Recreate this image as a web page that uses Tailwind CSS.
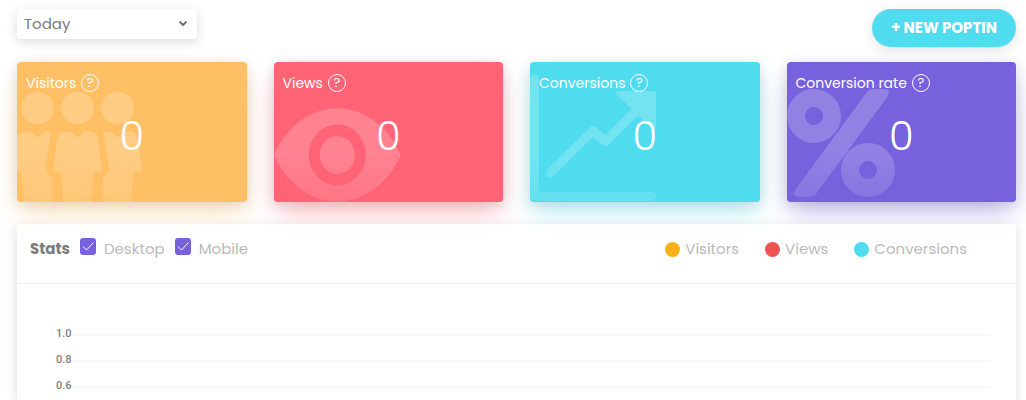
<!DOCTYPE html>
<html lang="en">

<head>
  <meta charset="UTF-8">
  <meta name="viewport" content="width=device-width, initial-scale=1.0">
  <title>Dashboard</title>
  <script src="https://cdn.jsdelivr.net/npm/@tailwindcss/browser@4"></script>
</head>

<body class="bg-white font-['Poppins','Inter',sans-serif] text-[15px] leading-6">
  <div class="h-screen overflow-hidden flex flex-col pt-[9px] pl-[17px] pr-[10px]">

    <!-- Top bar -->
    <header class="flex items-start justify-between mb-[15px]">
      <div class="relative">
        <select aria-label="Period" class="appearance-none block w-[180px] h-[30px] px-[7px] rounded bg-white text-[#7b7b7b] shadow-[0_3px_12px_rgba(0,0,0,0.14)]">
          <option>Today</option>
        </select>
        <svg class="absolute right-[9px] top-[11px] w-[10px] h-2 pointer-events-none" viewBox="0 0 10 8" fill="none" stroke="#757575" stroke-width="2"><path d="M1.500 1.500 5 5l3.500-3.500"/></svg>
      </div>
      <button class="h-[38px] px-[19px] rounded-full bg-[#50dcef] text-white font-bold shadow-[0_3px_12px_rgba(0,0,0,0.12)] cursor-pointer">+ NEW POPTIN</button>
    </header>

    <!-- Cards -->
    <section class="grid grid-cols-4 gap-[27px] mb-[22px] text-white">
      <div class="relative h-[140px] rounded bg-[#ffc065] shadow-[0_14px_26px_-4px_rgba(255,192,101,0.4),0_3px_14px_rgba(0,0,0,0.14)]">
        <svg class="absolute left-0 top-0 w-[140px] h-[140px] opacity-20" viewBox="0 0 140 140" fill="#fff">
          <circle cx="20.500" cy="46" r="16.300"/>
          <circle cx="60.500" cy="46" r="16.300"/>
          <circle cx="100.500" cy="46" r="16.300"/>
          <path d="M0 74Q3 69.700 8 69.700H13Q15 69.700 16.500 72L20.500 76 24.500 72Q26.500 69.700 29 69.700H34.300L29 104Q29 112 35.500 116L34.500 140H7L4.300 110H0Z"/>
          <path d="M48 69.700H53Q55 69.700 56.500 72L60.500 76 64.500 72Q66 69.700 68 69.700H73Q79 69.700 81 77L84.700 107Q84.700 110 82 110H77L74.500 140H46.500L44 110H39Q36.300 110 36.300 107L40 77Q42 69.700 48 69.700Z"/>
          <path d="M86.700 69.700H92Q94.500 69.700 96.500 72L100.500 76 104.500 72Q106 69.700 108 69.700H113Q119 69.700 121 77L124.700 107Q124.700 110 122 110H116.700L114 140H86.500L85.500 116Q92 112 92 104Z"/>
        </svg>
        <div class="absolute inset-x-0 bottom-0 h-12 rounded-b bg-linear-to-t from-[#ffc065]/40 to-[#ffc065]/0"></div>
        <h3 class="absolute left-[9px] top-[9px] flex items-center gap-[5px] text-sm/6">Visitors
          <button aria-label="About visitors" class="size-[18px] rounded-full border border-white text-[13px] leading-4">?</button>
        </h3>
        <div class="relative h-full flex items-center justify-center pt-2 text-[40px] leading-none font-light pointer-events-none">0</div>
      </div>

      <div class="relative h-[140px] rounded bg-[#ff6376] shadow-[0_14px_26px_-4px_rgba(255,99,118,0.4),0_3px_14px_rgba(0,0,0,0.14)]">
        <svg class="absolute left-0 top-0 w-[140px] h-[140px] opacity-20" viewBox="0 0 140 140" fill="#fff">
          <path fill-rule="evenodd" d="M0 93C12 65 37 46.300 63.300 46.300S115 65 126.700 93C115 121 90 139.700 63.300 139.700S12 121 0 93ZM34.800 93a28.500 30.500 0 1 0 57 0a28.500 30.500 0 1 0-57 0Z"/>
          <ellipse cx="63.300" cy="93" rx="17.700" ry="19"/>
        </svg>
        <div class="absolute inset-x-0 bottom-0 h-12 rounded-b bg-linear-to-t from-[#ff6376]/40 to-[#ff6376]/0"></div>
        <h3 class="absolute left-[9px] top-[9px] flex items-center gap-[5px] text-sm/6">Views
          <button aria-label="About views" class="size-[18px] rounded-full border border-white text-[13px] leading-4">?</button>
        </h3>
        <div class="relative h-full flex items-center justify-center pt-2 text-[40px] leading-none font-light pointer-events-none">0</div>
      </div>

      <div class="relative h-[140px] rounded bg-[#50dcef] shadow-[0_14px_26px_-4px_rgba(80,220,239,0.4),0_3px_14px_rgba(0,0,0,0.14)]">
        <svg class="absolute left-0 top-0 w-[140px] h-[140px] opacity-20" viewBox="0 0 140 140" fill="#fff">
          <path d="M0 17Q0 13 4.500 13T9 17V130H122Q126 130 126 134.500T122 139H5Q0 139 0 134Z"/>
          <path d="M89 29H123Q126 29 126 32V65Q126 69 122 67L87 33Q84 29 89 29Z"/>
          <path d="M20.300 111 63 68.500 75.500 79.500 104 51" fill="none" stroke="#fff" stroke-width="9" stroke-linecap="round" stroke-linejoin="round"/>
        </svg>
        <div class="absolute inset-x-0 bottom-0 h-12 rounded-b bg-linear-to-t from-[#50dcef]/40 to-[#50dcef]/0"></div>
        <h3 class="absolute left-[9px] top-[9px] flex items-center gap-[5px] text-sm/6">Conversions
          <button aria-label="About conversions" class="size-[18px] rounded-full border border-white text-[13px] leading-4">?</button>
        </h3>
        <div class="relative h-full flex items-center justify-center pt-2 text-[40px] leading-none font-light pointer-events-none">0</div>
      </div>

      <div class="relative h-[140px] rounded bg-[#7761dd] shadow-[0_14px_26px_-4px_rgba(119,97,221,0.4),0_3px_14px_rgba(0,0,0,0.14)]">
        <svg class="absolute left-0 top-0 w-[140px] h-[140px] opacity-20" viewBox="0 0 140 140" fill="none" stroke="#fff" stroke-width="18">
          <circle cx="27" cy="54" r="18"/>
          <circle cx="81" cy="108" r="18"/>
          <path d="M86 27H98Q104 28 101 34L29 132Q27 135 24 135H11Q5 134 8 128L80 30Q82 27 86 27Z" fill="#fff" stroke="none"/>
        </svg>
        <div class="absolute inset-x-0 bottom-0 h-12 rounded-b bg-linear-to-t from-[#7761dd]/40 to-[#7761dd]/0"></div>
        <h3 class="absolute left-[9px] top-[9px] flex items-center gap-[5px] text-sm/6">Conversion rate
          <button aria-label="About conversion rate" class="size-[18px] rounded-full border border-white text-[13px] leading-4">?</button>
        </h3>
        <div class="relative h-full flex items-center justify-center pt-2 text-[40px] leading-none font-light pointer-events-none">0</div>
      </div>
    </section>

    <!-- Stats -->
    <section class="relative flex-1 rounded-t bg-white/80 shadow-[0_3px_12px_rgba(0,0,0,0.14)]">
      <div class="flex items-center justify-between pt-[13px] pb-[22px] pl-[13px] pr-[49px] border-b border-[#efefef] text-[#bababa]">
        <div class="flex items-center">
          <h2 class="font-bold text-[#7b7b7b] mr-[10px]">Stats</h2>
          <div class="relative mr-2 mb-[5px]">
            <input id="desktop" type="checkbox" checked class="appearance-none block w-4 h-[17px] rounded-[3px] bg-[#7761dd]">
            <svg class="absolute left-0 top-0 w-4 h-4 pointer-events-none" viewBox="0 0 16 16" fill="none" stroke="#fff"><path d="M3 8.500 6.500 12 13.500 4.500"/></svg>
          </div>
          <label for="desktop" class="mr-[10px]">Desktop</label>
          <div class="relative mr-2 mb-[5px]">
            <input id="mobile" type="checkbox" checked class="appearance-none block w-4 h-[17px] rounded-[3px] bg-[#7761dd]">
            <svg class="absolute left-0 top-0 w-4 h-4 pointer-events-none" viewBox="0 0 16 16" fill="none" stroke="#fff"><path d="M3 8.500 6.500 12 13.500 4.500"/></svg>
          </div>
          <label for="mobile">Mobile</label>
        </div>
        <ul class="flex items-center gap-[26px]">
          <li class="flex items-center gap-[5px]"><span class="size-[15px] rounded-full bg-[#fbb117]"></span>Visitors</li>
          <li class="flex items-center gap-[5px]"><span class="size-[15px] rounded-full bg-[#ef5350]"></span>Views</li>
          <li class="flex items-center gap-[5px]"><span class="size-[15px] rounded-full bg-[#50dcef]"></span>Conversions</li>
        </ul>
      </div>

      <!-- Chart axis -->
      <div class="flex flex-col gap-[14px] pt-[44px] pl-[39px] pr-[26px] font-['Roboto','Liberation_Sans',sans-serif] text-[11px] leading-3 font-medium text-[#808080]">
        <div class="flex items-center"><span>1.0</span><span class="flex-1 h-[2px] mt-[2px] bg-[#f8f8f8]"></span></div>
        <div class="flex items-center"><span>0.8</span><span class="flex-1 h-[2px] mt-[2px] bg-[#f8f8f8]"></span></div>
        <div class="flex items-center"><span>0.6</span><span class="flex-1 h-[2px] mt-[2px] bg-[#f8f8f8]"></span></div>
      </div>
    </section>

  </div>
</body>

</html>
